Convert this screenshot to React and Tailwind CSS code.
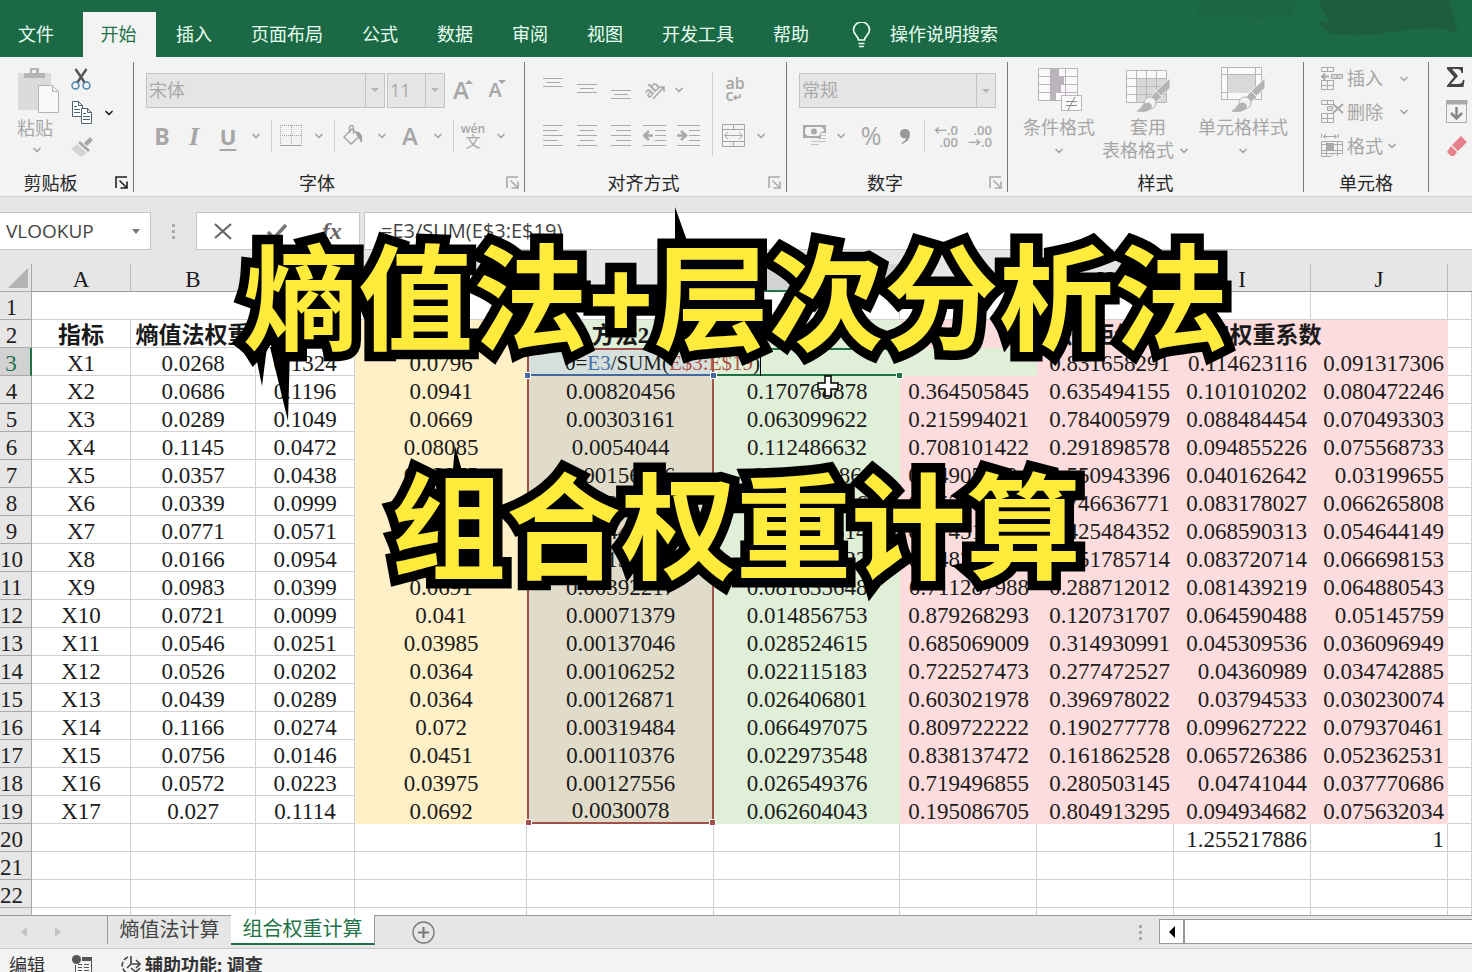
import { useState } from 'react';
import { ChevronDown } from 'lucide-react';

const MENU = ['文件', '开始', '插入', '页面布局', '公式', '数据', '审阅', '视图', '开发工具', '帮助'];

const ROWS = [
  ['X2', '0.0686', '0.1196', '0.0941', '0.00820456', '0.170768878', '0.364505845', '0.635494155', '0.101010202', '0.080472246'],
  ['X3', '0.0289', '0.1049', '0.0669', '0.00303161', '0.063099622', '0.215994021', '0.784005979', '0.088484454', '0.070493303'],
  ['X4', '0.1145', '0.0472', '0.08085', '0.0054044', '0.112486632', '0.708101422', '0.291898578', '0.094855226', '0.075568733'],
  ['X5', '0.0357', '0.0438', '0.03975', '0.00156366', '0.03254586', '0.449056604', '0.550943396', '0.040162642', '0.03199655'],
  ['X6', '0.0339', '0.0999', '0.0669', '0.00338661', '0.070488556', '0.253363229', '0.746636771', '0.083178027', '0.066265808'],
  ['X7', '0.0771', '0.0571', '0.0671', '0.00440241', '0.091631314', '0.574515648', '0.425484352', '0.068590313', '0.054644149'],
  ['X8', '0.0166', '0.0954', '0.056', '0.00158364', '0.032961722', '0.148214286', '0.851785714', '0.083720714', '0.066698153'],
  ['X9', '0.0983', '0.0399', '0.0691', '0.00392217', '0.081635648', '0.711287988', '0.288712012', '0.081439219', '0.064880543'],
  ['X10', '0.0721', '0.0099', '0.041', '0.00071379', '0.014856753', '0.879268293', '0.120731707', '0.064590488', '0.05145759'],
  ['X11', '0.0546', '0.0251', '0.03985', '0.00137046', '0.028524615', '0.685069009', '0.314930991', '0.045309536', '0.036096949'],
  ['X12', '0.0526', '0.0202', '0.0364', '0.00106252', '0.022115183', '0.722527473', '0.277472527', '0.04360989', '0.034742885'],
  ['X13', '0.0439', '0.0289', '0.0364', '0.00126871', '0.026406801', '0.603021978', '0.396978022', '0.03794533', '0.030230074'],
  ['X14', '0.1166', '0.0274', '0.072', '0.00319484', '0.066497075', '0.809722222', '0.190277778', '0.099627222', '0.079370461'],
  ['X15', '0.0756', '0.0146', '0.0451', '0.00110376', '0.022973548', '0.838137472', '0.161862528', '0.065726386', '0.052362531'],
  ['X16', '0.0572', '0.0223', '0.03975', '0.00127556', '0.026549376', '0.719496855', '0.280503145', '0.04741044', '0.037770686'],
  ['X17', '0.027', '0.1114', '0.0692', '0.0030078', '0.062604043', '0.195086705', '0.804913295', '0.094934682', '0.075632034'],
];

const PLAIN = 'bg-white border-r border-b border-[#d0d0d0] text-center p-0 pt-1 leading-[23px]';
const YELLOW = 'bg-[#fff0c8] text-center p-0 pt-1 leading-[24px]';
const GREEN = 'bg-[#e0efd8] text-center p-0 pt-1 leading-[24px]';
const PINK = 'bg-[#fddcdd] text-right p-0 pt-1 leading-[24px] pr-1';

const COLUMN_STYLES = [
  PLAIN,
  PLAIN,
  PLAIN,
  YELLOW,
  'bg-[#e1dcca] text-center p-0 pt-1 border-x-2 border-[#a0524a]',
  GREEN,
  'bg-[#fddcdd] text-right p-0 pt-1 leading-[24px] pr-2',
  PINK,
  PINK,
  PINK,
];

const Chevron = ({ className = 'w-5' }) => (
  <span className={`flex shrink-0 items-center justify-center ${className}`}>
    <ChevronDown className="h-3 w-3" strokeWidth={3.5} />
  </span>
);

const Tool = ({ label, width = 'w-9', children }) => (
  <button aria-label={label} className={`flex h-9 shrink-0 items-center justify-center ${width}`}>
    {children}
  </button>
);

const Divider = () => <span className="ml-[5px] mr-px h-8 w-px shrink-0 bg-[#cfcfcf]" />;

const Launcher = ({ dark }) => (
  <button aria-label="更多设置" className={`absolute right-1 top-2 h-3.5 w-3.5 ${dark ? 'text-[#222]' : 'text-[#aaa]'}`}>
    <svg viewBox="0 0 14 14" fill="none" stroke="currentColor" strokeWidth="1.6">
      <path d="M1 12V1h11M4.500 4.500l7 7M12 5.500V12H5.500" />
    </svg>
  </button>
);

const Group = ({ title, width, launcher, dark, className = '', children }) => (
  <section className={`relative mb-1 mt-[5px] flex shrink-0 flex-col border-r border-[#777] ${width}`}>
    <div className={`h-[106px] text-[#a6a6a6] ${className}`}>{children}</div>
    <div className="relative h-6 text-center leading-[30px] text-[#262626]">
      <span className={dark ? 'pr-8' : launcher ? 'pr-6' : ''}>{title}</span>
      {launcher && <Launcher dark={dark} />}
    </div>
  </section>
);

const Combo = ({ label, value, width }) => (
  <div className={`relative h-[35px] border border-[#c3c3c3] bg-[#e5e5e5] ${width}`}>
    <select aria-label={label} className="h-full w-full appearance-none bg-transparent px-0.5 text-[18px] text-[#aaa] outline-none">
      <option>{value}</option>
    </select>
    <span className="pointer-events-none absolute inset-y-0 right-0 flex w-[19px] items-center justify-center border-l border-[#c3c3c3]">
      <span className="border-x-4 border-t-4 border-x-transparent border-t-[#b5b5b5]" />
    </span>
  </div>
);

// each line is [x1, x2], spaced evenly from the top offset
const Lines = ({ rows, top = 1, step = 5 }) => (
  <svg width="22" height="24" viewBox="0 0 22 24" stroke="#a9a9a9">
    {rows.map(([a, b], i) => (
      <path key={i} d={`M${a} ${top + i * step + 0.5}H${b}`} />
    ))}
  </svg>
);

const IndentIcon = ({ out }) => (
  <svg width="24" height="24" viewBox="0 0 24 24" fill="none" stroke="#a9a9a9">
    <path d="M0 1.500h23M12 6.500h11M12 11.500h11M12 16.500h11M0 21.500h23" />
    <path d={out ? 'M10 11.500H2M6 7l-5 4.500L6 16' : 'M0 11.500h8M4 7l5 4.500L4 16'} strokeWidth="2.500" />
  </svg>
);

const PasteIcon = () => (
  <svg width="44" height="46" viewBox="0 0 44 46" fill="none">
    <path fill="#dcdadd" d="M1 5h33v37H1z" />
    <path fill="#b5b3b6" d="M7 5h6V0h9v5h6v5H7z" />
    <path fill="#f3f3f3" d="M15 2h4v3h-4z" />
    <path fill="#faf8fb" stroke="#b5b3b6" d="M21.500 17.500h14l6 6v21h-20zM35.500 17.500v6h6" />
  </svg>
);

const ScissorsIcon = () => (
  <svg width="20" height="22" viewBox="0 0 20 22" fill="none">
    <path d="M4.500 1l9.500 14M15.500 1L6 15" stroke="#555" strokeWidth="2.400" />
    <circle cx="4.500" cy="17.500" r="3.500" stroke="#4c86b0" strokeWidth="1.500" />
    <circle cx="15.500" cy="17.500" r="3.500" stroke="#4c86b0" strokeWidth="1.500" />
  </svg>
);

const CopyIcon = () => (
  <svg width="22" height="23" viewBox="0 0 22 23" fill="#fff" stroke="#4d6570">
    <path d="M1.500.5h6l4 4v11h-10zM7.500.5v4h4" />
    <path d="M3 5.500h3M3 8.500h6M3 11.500h6" />
    <path d="M10.500 7.500h6l4 4v11h-10zM16.500 7.500v4h4" />
    <path d="M12 12.500h3M12 15.500h7M12 18.500h7" />
  </svg>
);

const PainterIcon = () => (
  <svg width="23" height="20" viewBox="0 0 23 20">
    <path fill="#a8a8a8" d="M19 0l3 3-6 6-3-3zM9 4l10 9-2 2L7 6z" />
    <path fill="#d3d3d3" d="M6 7l10 9-6 4L0 12z" />
  </svg>
);

const Brush = () => (
  <g>
    <path d="M45 11v10L34 31l-5-5z" fill="#b4b2b5" stroke="#f3f3f3" />
    <path d="M31 24l6 6-6 5-5-5z" fill="#b4b2b5" stroke="#f3f3f3" />
    <circle cx="25" cy="36" r="6" fill="#f3f3f3" stroke="#b4b2b5" />
    <path d="M12 44c5-2 5-8 11-8 3 0 4 3 3 5-3 4-9 4-14 3z" fill="#b4b2b5" />
  </g>
);

const ConditionalIcon = () => (
  <svg width="46" height="45" viewBox="0 0 46 45" fill="none" stroke="#b9b5ba">
    <path fill="#faf8fb" d="M2.500 1.500h39v32h-39z" />
    <path d="M2 9.500h39M2 17.500h39M2 25.500h39M14.500 1v32M29.500 1v32" />
    <path fill="#b9b5ba" stroke="none" d="M15 2h8v7h-8zM15 10h13v7H15zM15 18h10v7H15zM15 26h5v7h-5z" />
    <path fill="#faf8fb" d="M25.500 28.500h20v15h-20z" />
    <path stroke="#888" d="M30 34.500h11M30 38.500h11M39 30l-7 13" />
  </svg>
);

const TableStyleIcon = () => (
  <svg width="46" height="45" viewBox="0 0 46 45" fill="none" stroke="#b9b5ba">
    <path fill="#faf8fb" d="M1.500 3.500h40v32h-40z" />
    <path fill="#dbd8dc" stroke="none" d="M12 11h29v24H12z" />
    <path d="M1 11.500h40M1 19.500h40M1 27.500h40M11.500 4v31M21.500 4v31M31.500 4v31" />
    <Brush />
  </svg>
);

const CellStyleIcon = () => (
  <svg width="46" height="45" viewBox="0 0 46 45" fill="none" stroke="#b9b5ba">
    <path fill="#faf8fb" d="M1.500.5h40v32h-40z" />
    <path d="M1 7.500h40M1 25.500h40M7.500 0v32M35.500 0v32" />
    <path fill="#dbd8dc" stroke="none" d="M8 8h27v18H8z" />
    <Brush />
  </svg>
);

const CellsIcon = ({ kind }) => (
  <svg width="24" height="24" viewBox="0 0 24 24" fill="none" stroke="#a9a9a9">
    {kind === 'format' ? (
      <>
        <path d="M1.500 0v4M18.500 0v4M4 2.500h12M6 .5l-3 2 3 2M14 .5l3 2-3 2" />
        <path d="M1.500 7.500h21v12h-21zM6.500 7v15M17.500 7v15M1 10.500h21M1 16.500h21M1.500 19v3.500h9l3-3" />
        <path fill="#a9a9a9" stroke="none" d="M7 9h7v7H7z" />
      </>
    ) : (
      <>
        <path d="M1.500.5h12v4h-12zM7.500 0v4M1.500 13.500h12v9h-12zM7.500 13v9M1 18.500h12" />
        {kind === 'insert' ? (
          <>
            <path fill="#d8d8d8" d="M11.500 7.500h11v4h-11zM17 7v4" />
            <path strokeWidth="2" d="M9 9.500H2M5 6.500l-3 3 3 3" />
          </>
        ) : (
          <>
            <path fill="#d8d8d8" d="M7.500 6.500h5v4h-5z" />
            <path strokeWidth="2" d="M13 4l10 9M23 4l-10 9" />
          </>
        )}
      </>
    )}
  </svg>
);

const FontTools = () => (
  <>
    <div className="flex items-center">
      <Combo label="字体" value="宋体" width="w-[239px]" />
      <Combo label="字号" value="11" width="ml-[2px] w-[58px]" />
      <Tool label="增大字号" width="ml-0.5 w-8">
        <span className="text-[24px] font-semibold leading-6">A</span>
        <span className="-ml-1 mb-4 border-x-4 border-b-4 border-x-transparent border-b-[#a6a6a6]" />
      </Tool>
      <Tool label="减小字号" width="w-9">
        <span className="text-[20px] font-semibold leading-6">A</span>
        <span className="-ml-1 mb-4 border-x-4 border-t-4 border-x-transparent border-t-[#a6a6a6]" />
      </Tool>
    </div>
    <div className="mt-2.5 flex items-center">
      <Tool label="加粗" width="w-8"><b className="text-[23px]">B</b></Tool>
      <Tool label="倾斜" width="w-8"><b className="font-['Liberation_Serif',serif] text-[26px] italic">I</b></Tool>
      <Tool label="下划线"><b className="text-[22px] font-bold underline underline-offset-4">U</b></Tool>
      <Chevron />
      <Divider />
      <Tool label="边框">
        <svg width="22" height="22" viewBox="0 0 22 22" fill="none" stroke="#a9a0a9">
          <path strokeDasharray="1 1" d="M.5 0v20M11.500 0v20M21.500 0v20M0 .5h22M0 10.500h22" />
          <path d="M0 20.500h22" />
        </svg>
      </Tool>
      <Chevron />
      <Divider />
      <Tool label="填充颜色">
        <svg width="22" height="22" viewBox="0 0 22 22" fill="none" stroke="#a3a0a3" strokeWidth="1.300">
          <path d="M9 4l8 7-9 8-7-7zM6.500 8V2.500a2 2 0 014 0V9" />
          <path fill="#a3a0a3" d="M14 7c4 1 5 4 4.500 10-1-3-2-5-4.500-7z" />
        </svg>
      </Tool>
      <Chevron />
      <Tool label="字体颜色"><span className="text-[24px] font-semibold">A</span></Tool>
      <Chevron />
      <Divider />
      <Tool label="拼音">
        <span className="flex flex-col items-center">
          <span className="text-[12px] font-semibold leading-[10px]">wén</span>
          <span className="text-[15px] leading-[14px]">文</span>
        </span>
      </Tool>
      <Chevron />
    </div>
  </>
);

const AlignTools = () => (
  <div className="flex">
    <div>
      <div className="flex items-center">
        <Tool label="顶端对齐" width="w-[34px]"><Lines top={0} step={4} rows={[[1, 21], [4, 18], [1, 21]]} /></Tool>
        <Tool label="垂直居中" width="w-[34px]"><Lines top={6} step={4} rows={[[1, 21], [4, 18], [1, 21]]} /></Tool>
        <Tool label="底端对齐" width="w-[34px]"><Lines top={12} step={4} rows={[[1, 21], [4, 18], [1, 21]]} /></Tool>
        <Tool label="方向" width="w-[34px]">
          <svg className="overflow-visible" width="22" height="22" viewBox="0 0 22 22" fill="none" stroke="#a6a6a6" strokeWidth="1.500">
            <path d="M9 20L20 8M15 8h5v5" />
            <text x="0" y="16" transform="rotate(-45 7 12)" fontSize="14" fill="#a6a6a6" stroke="none" fontWeight="600">ab</text>
          </svg>
        </Tool>
        <Chevron className="w-3.5" />
      </div>
      <div className="mt-2.5 flex items-center">
        <Tool label="左对齐" width="w-[34px]"><Lines rows={[[1, 21], [1, 16], [1, 21], [1, 16], [1, 21]]} /></Tool>
        <Tool label="居中" width="w-[34px]"><Lines rows={[[1, 21], [4, 18], [1, 21], [4, 18], [1, 21]]} /></Tool>
        <Tool label="右对齐" width="w-[34px]"><Lines rows={[[1, 21], [6, 21], [1, 21], [6, 21], [1, 21]]} /></Tool>
        <Tool label="减少缩进" width="w-[34px]"><IndentIcon out /></Tool>
        <Tool label="增加缩进" width="w-[34px]"><IndentIcon /></Tool>
      </div>
    </div>
    <span className="ml-1.5 h-[84px] w-px bg-[#cfcfcf]" />
    <div>
      <Tool label="自动换行" width="w-11">
        <span className="flex flex-col text-left text-[16px] font-semibold leading-[12px]">
          <span>ab</span>
          <span>c<span className="text-[11px]">↵</span></span>
        </span>
      </Tool>
      <div className="mt-2.5 flex items-center">
        <Tool label="合并后居中" width="w-[42px]">
          <svg width="24" height="24" viewBox="0 0 24 24" fill="none" stroke="#a6a6a6">
            <path d="M.5.5h22v22H.5zM0 5.500h22M0 17.500h22M11.500 0v5M11.500 18v5M3 11.500h17M6 8l-3.500 3.500L6 15M17 8l3.500 3.500L17 15" />
          </svg>
        </Tool>
        <Chevron className="w-3" />
      </div>
    </div>
  </div>
);

const NumberTools = () => (
  <>
    <Combo label="数字格式" value="常规" width="w-[197px]" />
    <div className="mt-2.5 flex items-center">
      <Tool label="会计数字格式" width="w-8">
        <svg width="24" height="22" viewBox="0 0 24 22">
          <path fill="#a9a9a9" fillRule="evenodd" d="M0 0h23v8h-5v5H0zM3 2C3 4 2 4 2 4v5c1 0 2 1 2 2h13V8l4-2V4c-1 0-2-1-2-2z" />
          <circle cx="11" cy="6.500" r="3" fill="#a9a9a9" />
          <path stroke="#c4c4c4" d="M15 10.500h8M15 13.500h8M8 16.500h9M15 16.500h8M8 19.500h8" />
        </svg>
      </Tool>
      <Chevron />
      <Tool label="百分比样式" width="w-10"><span className="text-[25px]">%</span></Tool>
      <Tool label="千位分隔样式" width="w-7">
        <svg width="10" height="15" viewBox="0 0 10 15" fill="#999">
          <path d="M5 0c3 0 5 2 5 5 0 5-3 8-8 10l-.5-1C4 12.500 6 11 6 9c-3 1-6-1-6-4 0-3 2-5 5-5z" />
        </svg>
      </Tool>
      <Divider />
      <Tool label="增加小数位数" width="w-10">
        <span className="flex flex-col items-end text-[13px] font-semibold leading-[12px]"><span>←.0</span><span>.00</span></span>
      </Tool>
      <Tool label="减少小数位数" width="w-7">
        <span className="flex flex-col items-end text-[13px] font-semibold leading-[12px]"><span>.00</span><span>→.0</span></span>
      </Tool>
    </div>
  </>
);

const Ribbon = () => (
  <div className="flex h-[140px] shrink-0 overflow-hidden border-b border-[#d2d2d2] bg-[#f3f3f3] text-[18px]">
    <Group title="剪贴板" width="w-[134px]" launcher dark className="flex pl-4 pt-1.5">
      <button className="flex w-[46px] flex-col items-center leading-6">
        <PasteIcon />
        <span className="-ml-2 mt-0.5">粘贴</span>
        <Chevron className="-ml-1 mt-1 w-5" />
      </button>
      <div className="flex flex-col pl-[9px]">
        <button aria-label="剪切" className="flex h-[34px]"><ScissorsIcon /></button>
        <button aria-label="复制" className="flex h-[34px] items-start text-[#222]">
          <CopyIcon />
          <Chevron className="ml-2.5 h-6 w-3" />
        </button>
        <button aria-label="格式刷" className="flex h-[34px] pt-0.5"><PainterIcon /></button>
      </div>
    </Group>
    <Group title="字体" width="w-[391px]" launcher className="pl-3 pt-2.5">
      <FontTools />
    </Group>
    <Group title="对齐方式" width="w-[262px]" launcher className="pl-[11px] pt-2.5">
      <AlignTools />
    </Group>
    <Group title="数字" width="w-[221px]" launcher className="pl-3 pt-[11px]">
      <NumberTools />
    </Group>
    <Group title="样式" width="w-[296px]" className="flex items-start pl-[9px] pt-[5px] leading-[23px]">
      <button className="flex w-[84px] flex-col items-center">
        <ConditionalIcon />
        <span className="mt-1 whitespace-nowrap">条件格式</span>
        <Chevron className="h-[23px]" />
      </button>
      <button className="flex w-[94px] flex-col items-center whitespace-nowrap">
        <TableStyleIcon />
        <span className="mt-1">套用</span>
        <span className="flex">表格格式<Chevron /></span>
      </button>
      <button className="flex w-[96px] flex-col items-center whitespace-nowrap">
        <CellStyleIcon />
        <span className="mt-1">单元格样式</span>
        <Chevron className="h-[23px]" />
      </button>
    </Group>
    <Group title="单元格" width="w-[125px]" className="pl-4">
      <button className="flex h-[33px] items-center gap-[3px]"><CellsIcon kind="insert" />插入<Chevron className="ml-2 w-5" /></button>
      <button className="flex h-[34px] items-center gap-[3px]"><CellsIcon kind="delete" />删除<Chevron className="ml-2 w-5" /></button>
      <button className="flex h-[34px] items-center gap-[3px]"><CellsIcon kind="format" />格式<Chevron className="w-3" /></button>
    </Group>
    <div className="flex flex-col gap-3 pl-[17px] pt-[9px]">
      <button aria-label="自动求和">
        <svg width="20" height="22" viewBox="0 0 20 22" fill="#444">
          <path d="M1 1h16v6h-1.500C15 4 14 3 11 3H6l6 7-7 8h7c3 0 4-1 5-4h1.500l-1 7H1v-1.500L8 11 1 3z" />
        </svg>
      </button>
      <button aria-label="填充">
        <svg width="22" height="23" viewBox="0 0 22 23" fill="none" stroke="#a9a9a9">
          <path d="M.5.5h20v22H.5z" />
          <path fill="#a9a9a9" d="M0 0h21v4H0z" />
          <path stroke="#888" strokeWidth="2.500" d="M10.500 7v11M5 13l5.500 5.500L16 13" />
        </svg>
      </button>
      <button aria-label="清除">
        <svg width="22" height="22" viewBox="0 0 22 22" fill="#e8808b">
          <path d="M15 1l6 6-9 9-6-6zM5 11l6 6-3 4H5l-4-4z" />
        </svg>
      </button>
    </div>
  </div>
);

const FormulaBar = () => {
  const [formula, setFormula] = useState('=E3/SUM(E$3:E$19)');
  return (
    <div className="flex h-[67px] shrink-0 pb-[14px] pt-[15px] font-['Open_Sans','Noto_Sans',sans-serif] text-[#444]">
      <div className="flex w-[151px] shrink-0 items-center border border-l-0 border-[#c6c6c6] bg-white">
        <input aria-label="名称框" defaultValue="VLOOKUP" className="w-[132px] pl-1.5 text-[19px] outline-none" />
        <span className="border-x-4 border-t-[5px] border-x-transparent border-t-[#777]" />
      </div>
      <div className="flex w-[45px] shrink-0 flex-col items-center justify-center gap-[3px]">
        <span className="h-[3px] w-[3px] bg-[#aaa]" />
        <span className="h-[3px] w-[3px] bg-[#aaa]" />
        <span className="h-[3px] w-[3px] bg-[#aaa]" />
      </div>
      <div className="mr-1 flex w-[164px] shrink-0 items-center justify-around border border-[#c6c6c6] bg-white text-[#666]">
        <button aria-label="取消">
          <svg width="18" height="17" viewBox="0 0 18 17" fill="none" stroke="#666" strokeWidth="2.200"><path d="M1 1l16 15M17 1L1 15" /></svg>
        </button>
        <button aria-label="输入">
          <svg width="20" height="17" viewBox="0 0 20 17" fill="none" stroke="#777" strokeWidth="3.500"><path d="M1 9l6 6L19 2" /></svg>
        </button>
        <button aria-label="插入函数" className="font-['Liberation_Serif',serif] text-[24px] font-bold italic leading-7">
          fx
        </button>
      </div>
      <input
        aria-label="编辑栏"
        value={formula}
        onChange={(e) => setFormula(e.target.value)}
        className="min-w-0 flex-1 border border-r-0 border-[#c6c6c6] bg-white pl-4 text-[20px] outline-none"
      />
    </div>
  );
};

const RowHead = ({ n, active }) => (
  <th
    className={`border-b border-r border-[#a9a9a9] p-0 pr-2 pt-1 font-normal leading-[23px] ${
      active ? 'border-r-2 border-r-[#217346] bg-[#d2d2d2] text-[#217346]' : 'bg-[#e6e6e6] text-[#222]'
    }`}
  >
    {n}
  </th>
);

const Handle = ({ className }) => <span className={`absolute h-[7px] w-[7px] border border-white ${className}`} />;

const EditingRow = () => (
  <tr className="h-7">
    <RowHead n={3} active />
    <td className={PLAIN}>X1</td>
    <td className={PLAIN}>0.0268</td>
    <td className={PLAIN}>0.1324</td>
    <td className={YELLOW}>0.0796</td>
    <td colSpan={3} className="relative p-0">
      <div className="flex h-7">
        <div className="w-[187px] border-2 border-[#a0524a] border-b-[#45699e] bg-[#d5dfdc]" />
        <div className="w-[186px] border-b-2 border-t-2 border-[#217346] bg-[#e0efd8]" />
        <div className="flex-1 bg-[#e0efd8]" />
      </div>
      <div
        contentEditable
        suppressContentEditableWarning
        className="absolute left-[38px] top-0 whitespace-nowrap border-r border-black pt-0.5 text-[21px] leading-[26px] outline-none"
      >
        0=<span className="text-[#4472a8]">E3</span>/SUM(<span className="text-[#b0524a]">E$3:E$19</span>)
      </div>
      <Handle className="-bottom-[3px] -left-[3px] bg-[#45699e]" />
      <Handle className="-bottom-[3px] left-[183px] bg-[#45699e]" />
      <Handle className="-bottom-[3px] left-[369px] bg-[#217346]" />
    </td>
    <td className={PINK}>0.831658291</td>
    <td className={PINK}>0.114623116</td>
    <td className={PINK}>0.091317306</td>
    <td className={PLAIN} />
  </tr>
);

const Sheet = () => (
  <div className="min-h-0 flex-1 overflow-hidden bg-white">
    <table className="w-full table-fixed border-separate border-spacing-0 font-['Liberation_Serif','Noto_Sans_CJK_SC',serif] text-[23px] leading-[24px] text-[#1a1a1a]">
      <colgroup>
        <col className="w-[32px]" />
        <col className="w-[99px]" />
        <col className="w-[125px]" />
        <col className="w-[99px]" />
        <col className="w-[172px]" />
        <col className="w-[187px]" />
        <col className="w-[186px]" />
        <col className="w-[137px]" />
        <col className="w-[137px]" />
        <col className="w-[137px]" />
        <col className="w-[137px]" />
        <col />
      </colgroup>
      <thead>
        <tr className="h-7">
          <th className="border-b border-r border-[#a9a9a9] bg-[#e6e6e6] p-0 align-bottom">
            <span className="mb-[3px] ml-2 block h-5 w-5 bg-[#b4b4b4] [clip-path:polygon(100%_0,100%_100%,0_100%)]" />
          </th>
          {'ABCDEFGHIJ'.split('').map((c) => (
            <th
              key={c}
              className={`border-b border-r p-0 pt-[3px] font-normal leading-[23px] ${
                c === 'F' ? 'border-b-2 border-[#217346] border-r-[#bbb] bg-[#d2d2d2] text-[#217346]' : 'border-b-[#999] border-r-[#bbb] bg-[#e6e6e6]'
              }`}
            >
              {c}
            </th>
          ))}
          <th className="border-b border-[#999] bg-[#e6e6e6] p-0" />
        </tr>
      </thead>
      <tbody>
        <tr className="h-7">
          <RowHead n={1} />
          <td colSpan={6} className={PLAIN} />
          <td className={PLAIN} />
          <td className={PLAIN} />
          <td className={PLAIN} />
          <td className={PLAIN} />
          <td className={PLAIN} />
        </tr>
        <tr className="h-7 whitespace-nowrap font-bold">
          <RowHead n={2} />
          <td className={PLAIN}>指标</td>
          <td className={PLAIN}>熵值法权重</td>
          <td className={PLAIN} />
          <td className={YELLOW} />
          <td className={GREEN}>方法2</td>
          <td className={GREEN} />
          <td colSpan={4} className="bg-[#fddcdd] p-0 pt-1 text-center">方法3:矩估计法确定权重系数</td>
          <td className={PLAIN} />
        </tr>
        <EditingRow />
        {ROWS.map((row, i) => (
          <tr key={row[0]} className="h-7">
            <RowHead n={i + 4} />
            {row.map((value, c) => (
              <td
                key={c}
                className={`${COLUMN_STYLES[c]} ${c === 4 ? (i === ROWS.length - 1 ? 'relative border-b-2 leading-[22px]' : 'leading-[24px]') : ''}`}
              >
                {value}
                {c === 4 && i === ROWS.length - 1 && (
                  <>
                    <Handle className="-bottom-1 -left-1 bg-[#a0524a]" />
                    <Handle className="-bottom-1 -right-1 bg-[#a0524a]" />
                  </>
                )}
              </td>
            ))}
            <td className={PLAIN} />
          </tr>
        ))}
        {[20, 21, 22, null].map((n) => (
          <tr key={n ?? 'next'} className="h-7">
            <RowHead n={n} />
            {Array.from({ length: 11 }, (_, c) => (
              <td
                key={c}
                className={`border-b border-r border-[#d0d0d0] bg-white p-0 pt-1 text-right leading-[23px] ${c > 7 ? 'pr-[3px]' : ''}`}
              >
                {n === 20 && c === 8 && '1.255217886'}
                {n === 20 && c === 9 && '1'}
              </td>
            ))}
          </tr>
        ))}
      </tbody>
    </table>
  </div>
);

const SheetTabs = () => (
  <div className="flex h-[34px] shrink-0 items-start border-b border-t border-b-[#c8c8c8] border-t-[#999] bg-[#e6e6e6] text-[20px] text-[#444]">
    <div className="flex h-8 w-[107px] items-center gap-7 pl-[21px]">
      <button aria-label="上一个工作表" className="border-y-[5px] border-r-[6px] border-y-transparent border-r-[#c3c3c3]" />
      <button aria-label="下一个工作表" className="border-y-[5px] border-l-[6px] border-y-transparent border-l-[#c3c3c3]" />
    </div>
    <button className="h-[28px] w-[124px] border-l border-[#999] leading-[26px]">熵值法计算</button>
    <button className="-mt-px h-[30px] w-[144px] border-b-2 border-r border-b-[#217346] border-r-[#999] bg-white leading-[26px] text-[#217346]">组合权重计算</button>
    <button aria-label="新工作表" className="ml-[37px] mt-[5px]">
      <svg width="23" height="23" viewBox="0 0 23 23" fill="none" stroke="#777" strokeWidth="1.300">
        <circle cx="11.500" cy="11.500" r="10.500" />
        <path strokeWidth="2" d="M6 11.500h11M11.500 6v11" />
      </svg>
    </button>
    <div className="ml-auto mr-[17px] flex h-8 flex-col items-center justify-center gap-[3px]">
      <span className="h-[3px] w-[3px] bg-[#aaa]" />
      <span className="h-[3px] w-[3px] bg-[#aaa]" />
      <span className="h-[3px] w-[3px] bg-[#aaa]" />
    </div>
    <div className="mt-[3px] flex h-[25px] w-[313px] border border-r-0 border-[#999] bg-white">
      <button aria-label="向左滚动" className="flex w-[25px] items-center justify-center border-r-2 border-[#999]">
        <span className="border-y-[6px] border-r-[6px] border-y-transparent border-r-black" />
      </button>
    </div>
  </div>
);

const StatusBar = () => (
  <div className="flex h-[23px] shrink-0 items-start overflow-hidden bg-[#f3f3f3] text-[18px] leading-[32px] text-[#333]">
    <span className="ml-[9px] w-[63px]">编辑</span>
    <svg className="mt-1.5" width="21" height="20" viewBox="0 0 21 20" fill="#555">
      <circle cx="4.500" cy="4.500" r="4.500" />
      <path d="M10 2h10v4H10z" />
      <path fill="none" stroke="#555" d="M3.500 10v9M19.500 6v14M6 9.500h4M12 9.500h5M6 12.500h4M12 12.500h5M6 15.500h4M12 15.500h5" />
    </svg>
    <svg className="ml-7 mt-1.5" width="21" height="20" viewBox="0 0 21 20" fill="none" stroke="#444" strokeWidth="1.600">
      <path strokeDasharray="5 2" d="M7 2C0 5-1 14 6 18" />
      <path d="M10 1v8M10 9h9M15 5l4 4-4 4M10 9l-4 4M10 13l8 7M19 13l-7 7" />
    </svg>
    <button className="ml-[3px] h-8 font-bold leading-[32px]">辅助功能: 调查</button>
  </div>
);

const Caption = () => (
  <div className="pointer-events-none absolute inset-x-0 top-[182px] flex justify-center">
    {/* sharp points of the outline */}
    <svg className="absolute left-1/2 top-0 -translate-x-1/2" width="1000" height="320" viewBox="0 0 1000 320">
      <path d="M18 165h13l-5 39zM34 165h20l-2 74zM439 70V25l16 45zM215 310l4-46 13 46zM518 310l5-16 6 16zM752 310l2-19 5 19z" />
    </svg>
    <h1 className="relative text-center text-[115px] font-bold leading-[229px] text-[#ffeb3b] [-webkit-text-stroke:19px_black] [paint-order:stroke_fill]">
      <span className="block whitespace-nowrap">熵值法+层次分析法</span>
      <span className="block whitespace-nowrap">组合权重计算</span>
    </h1>
  </div>
);

export default function App() {
  const [tab, setTab] = useState('开始');

  return (
    <div className="relative flex h-screen flex-col overflow-hidden bg-[#e6e6e6] font-['Open_Sans','Noto_Sans_CJK_SC',sans-serif]">
      <header className="relative flex h-[57px] shrink-0 items-end bg-[#1c6a45] text-[18px] text-[#e8fff2]">
        <svg className="absolute right-0 top-0" width="290" height="40" viewBox="0 0 290 40" fill="#1e5c3e">
          <path d="M18 0h100l-10 14c-40 10-60-4-92 2z" opacity=".4" />
          <path d="M136 0h130l10 33c-30-12-70 4-110 2-20 0-26-6-30-15l12 4z" />
        </svg>
        <nav className="relative flex">
          {MENU.map((name) => (
            <button
              key={name}
              onClick={() => setTab(name)}
              className={`h-[45px] whitespace-nowrap leading-[43px] ${name === '文件' ? 'w-[83px] pr-[11px]' : name === '开始' ? 'w-[73px] pr-0.5' : 'pl-5 pr-[19px]'} ${
                tab === name ? 'bg-[#f3f3f3] text-[#217346]' : ''
              }`}
            >
              {name}
            </button>
          ))}
        </nav>
        <label className="relative flex h-[45px] items-center pl-6">
          <svg width="20" height="26" viewBox="0 0 20 26" fill="none" stroke="#e8fff2" strokeWidth="1.600">
            <path d="M6.500 18c0-4-5-5-5-10a8 8 0 0116 0c0 5-5 6-5 10zM6.500 21.500h6M7 24.500h5" />
          </svg>
          <input aria-label="操作说明搜索" placeholder="操作说明搜索" className="ml-[18px] w-[140px] outline-none placeholder:text-[#e8fff2]" />
        </label>
      </header>
      <Ribbon />
      <FormulaBar />
      <Sheet />
      <SheetTabs />
      <StatusBar />
      <Caption />
      <svg className="pointer-events-none absolute left-[817px] top-[375px]" width="22" height="22" viewBox="0 0 22 22" fill="#fff" stroke="#000" strokeWidth="1.500">
        <path d="M8 1h6v7h7v6h-7v7H8v-7H1V8h7z" />
      </svg>
    </div>
  );
}
